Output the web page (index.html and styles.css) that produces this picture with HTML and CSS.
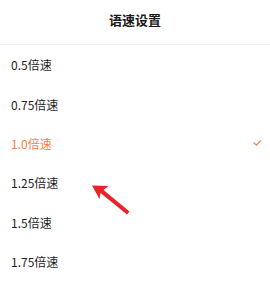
FILE: index.html
```html
<!DOCTYPE html>
<html lang="zh">
<head>
<meta charset="utf-8">
<link rel="stylesheet" href="styles.css">
</head>
<body>
<div class="sheet">
  <div class="header"><span class="title">语速设置</span></div>
  <ul class="list">
    <li class="item">0.5倍速</li>
    <li class="item">0.75倍速</li>
    <li class="item active">1.0倍速
      <svg class="check" width="10" height="8" viewBox="0 0 10 8"><path d="M1.5 3.5 L4.5 6.2 L8.8 1.5" fill="none" stroke="#f08048" stroke-width="1.2"/></svg>
    </li>
    <li class="item">1.25倍速</li>
    <li class="item">1.5倍速</li>
    <li class="item">1.75倍速</li>
  </ul>
  <svg class="arrow" width="270" height="284" viewBox="0 0 270 284">
    <polygon points="92,185.5 108.5,186 103.5,190 129.5,211.5 127,214.5 100.5,193 99.5,199" fill="#e8242a"/>
  </svg>
</div>
</body>
</html>
```
FILE: styles.css
```css
html, body {
  margin: 0;
  padding: 0;
  background: #ffffff;
}
.sheet {
  position: relative;
  width: 270px;
  height: 284px;
  overflow: hidden;
  font-family: "Noto Sans CJK SC", "Noto Sans", Roboto, sans-serif;
}
.header {
  height: 44px;
  border-bottom: 1px solid #f2f2f2;
  display: flex;
  justify-content: center;
}
.title {
  line-height: 40px;
  font-size: 13px;
  font-weight: 700;
  color: #1a1a1a;
}
.list {
  list-style: none;
  margin: 0;
  padding: 0;
}
.item {
  height: 39.4px;
  display: flex;
  align-items: center;
  justify-content: space-between;
  padding: 0 8px 0 11px;
  font-size: 12px;
  color: #1e1e1e;
}
.item.active {
  color: #f08048;
}
.check {
  display: block;
}
.arrow {
  position: absolute;
  left: 0;
  top: 0;
}
```
